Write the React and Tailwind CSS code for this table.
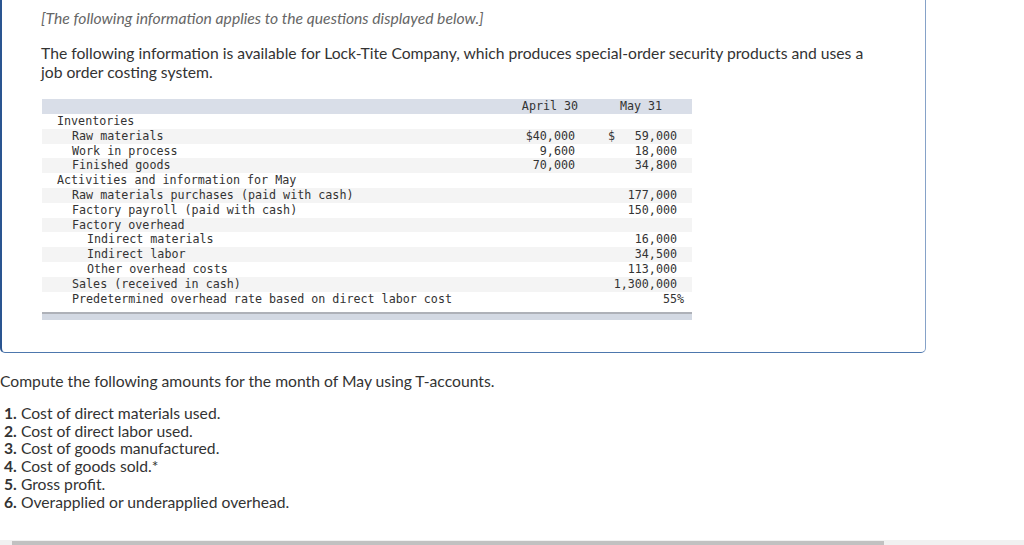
import React from "react";

const mono = { fontFamily: '"DejaVu Sans Mono", "Liberation Mono", monospace' };

const rows = [
  { label: "Inventories", lvl: 0 },
  { label: "Raw materials", lvl: 1, a: "$40,000", b: "59,000", bd: true },
  { label: "Work in process", lvl: 1, a: "9,600", b: "18,000" },
  { label: "Finished goods", lvl: 1, a: "70,000", b: "34,800" },
  { label: "Activities and information for May", lvl: 0 },
  { label: "Raw materials purchases (paid with cash)", lvl: 1, b: "177,000" },
  { label: "Factory payroll (paid with cash)", lvl: 1, b: "150,000" },
  { label: "Factory overhead", lvl: 1 },
  { label: "Indirect materials", lvl: 2, b: "16,000" },
  { label: "Indirect labor", lvl: 2, b: "34,500" },
  { label: "Other overhead costs", lvl: 2, b: "113,000" },
  { label: "Sales (received in cash)", lvl: 1, b: "1,300,000" },
  { label: "Predetermined overhead rate based on direct labor cost", lvl: 1, b: "55", pct: true },
];

const pads = ["pl-[15px]", "pl-[30px]", "pl-[45px]"];

const items = [
  "Cost of direct materials used.",
  "Cost of direct labor used.",
  "Cost of goods manufactured.",
  "Cost of goods sold.*",
  "Gross profit.",
  "Overapplied or underapplied overhead.",
];

export default function App() {
  return (
    <div
      className="h-[545px] w-[1024px] overflow-hidden bg-white flex flex-col text-[#333]"
      style={{ fontFamily: 'Lato, "Open Sans", Arial, sans-serif' }}
    >
      <div className="w-[926px] border-l-2 border-l-[#2a5591] border-b border-b-[#4d77ad] border-r border-r-[#86a2c8] rounded-b-[5px] pl-[39px] pt-[8px] pb-[32px]">
        <p className="italic text-[15.7px] leading-[20px] text-[#666]">
          [The following information applies to the questions displayed below.]
        </p>
        <p className="mt-[16px] text-[15.7px] leading-[19px] pr-[40px] text-[#333]">
          The following information is available for Lock-Tite Company, which produces special-order security products and uses a job order costing system.
        </p>
        <div className="mt-[17px] w-[650px] ml-[1px] text-[11.7px] text-[#333]" style={mono}>
          <div className="flex h-[15px] items-center bg-[#d9dee8]">
            <div className="flex-1" />
            <div className="w-[80px] text-center">April 30</div>
            <div className="w-[102px] text-center">May 31</div>
          </div>
          {rows.map((r, i) => (
            <div
              key={i}
              className={`flex h-[14.8px] items-center leading-[14.8px] whitespace-pre ${i % 2 === 1 ? "bg-[#f4f4f4]" : "bg-white"}`}
            >
              <div className={`flex-1 ${pads[r.lvl]}`}>{r.label}</div>
              <div className="w-[80px] pr-[15px] text-right">{r.a || ""}</div>
              <div className="w-[102px] pl-[18px] pr-[15px] flex justify-between">
                <span>{r.bd ? "$" : ""}</span>
                {r.pct ? (
                  <span className="-mr-[7px]">{r.b}%</span>
                ) : (
                  <span>{r.b || ""}</span>
                )}
              </div>
            </div>
          ))}
          <div className="mt-[6px] h-[1.5px] bg-[#aeb1b8]" />
          <div className="h-[6px] bg-[#d3d9e3]" />
        </div>
      </div>

      <p className="mt-[18px] text-[15.7px] leading-[20px] text-[#333]">
        Compute the following amounts for the month of May using T-accounts.
      </p>
      <ol className="mt-[14px] text-[15.7px] leading-[17.8px] text-[#333] pl-[4px]">
        {items.map((t, i) => (
          <li key={i}>
            <span className="font-bold">{i + 1}.</span> {t}
          </li>
        ))}
      </ol>

      <div className="mt-auto h-[5px] bg-[#f1f1f1] flex items-end">
        <div className="ml-[12px] w-[872px] h-[4px] bg-[#c1c1c1]" />
      </div>
    </div>
  );
}
